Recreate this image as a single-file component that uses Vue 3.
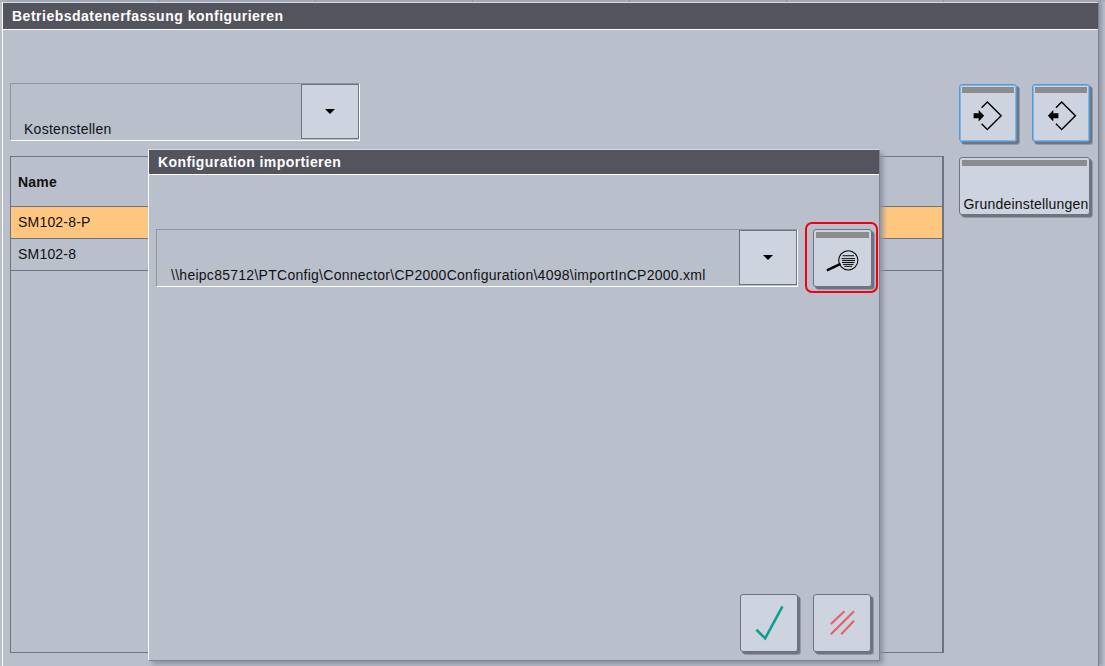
<script setup>
const ticks = [1, 2, 3, 4, 5, 6, 7]
</script>

<template>
  <div class="screen">
    <div class="strip">
      <span v-for="t in ticks" :key="t" class="tick"></span>
    </div>
    <section class="window">
      <header class="title">Betriebsdatenerfassung konfigurieren</header>
      <div class="body">
        <div class="main">
          <div class="combo">
            <span class="combo-text">Kostenstellen</span>
            <div class="drop"><i class="caret"></i></div>
          </div>
          <div class="table">
            <div class="row head">Name</div>
            <div class="row selected">SM102-8-P</div>
            <div class="row">SM102-8</div>
          </div>
        </div>
        <aside class="side">
          <div class="pair">
            <button class="btn blue">
              <span class="bar"></span>
              <svg width="54" height="50" viewBox="0 0 54 50">
                <path d="M20.3 15.3 L26.3 9.3 L40.7 23.7 L26.3 38 L20.3 32" fill="none" stroke="#000" stroke-width="1.5" />
                <path d="M12 21 H17.3 V17.7 L23 23.7 L17.3 29.7 V26.3 H12 Z" fill="#000" />
              </svg>
            </button>
            <button class="btn blue">
              <span class="bar"></span>
              <svg width="54" height="50" viewBox="0 0 54 50">
                <path d="M21.7 15.3 L27.7 9.3 L42 23.7 L27.7 38 L21.7 32" fill="none" stroke="#000" stroke-width="1.5" />
                <path d="M24.3 21 H19 V17.7 L13.3 23.7 L19 29.7 V26.3 H24.3 Z" fill="#000" />
              </svg>
            </button>
          </div>
          <button class="btn wide">
            <span class="bar"></span>
            <span class="label">Grundeinstellungen</span>
          </button>
        </aside>
      </div>
    </section>

    <section class="dialog">
      <header class="title small">Konfiguration importieren</header>
      <div class="dialog-body">
        <div class="path-row">
          <div class="combo path">
            <span class="combo-text">\\heipc85712\PTConfig\Connector\CP2000Configuration\4098\importInCP2000.xml</span>
            <div class="drop"><i class="caret"></i></div>
          </div>
          <button class="btn ringed">
            <span class="bar"></span>
            <svg width="54" height="50" viewBox="0 0 54 50">
              <circle cx="32.5" cy="23.3" r="10" fill="none" stroke="#000" stroke-width="1.1" />
              <path d="M10.2 33.7 L24.5 27" stroke="#000" stroke-width="2.6" fill="none" />
              <path d="M26.5 18.5 H38.5 M25.5 21.5 H39.5 M26 23.5 H39.5 M26 25.5 H39 M27 27.5 H38 M28.5 29.5 H36.5" stroke="#000" stroke-width="1" fill="none" />
            </svg>
          </button>
        </div>
        <div class="footer">
          <button class="btn plain">
            <svg width="54" height="54" viewBox="0 0 54 54">
              <path d="M14 34 L23 43 L41 9.7" fill="none" stroke="#0f9d90" stroke-width="2.6" />
            </svg>
          </button>
          <button class="btn plain">
            <svg width="54" height="54" viewBox="0 0 54 54">
              <path d="M15.5 28 L29.5 14.7 M15.5 38.7 L39.5 14.7 M26.2 38.7 L39.5 24.7" fill="none" stroke="#e2626a" stroke-width="2.2" />
            </svg>
          </button>
        </div>
      </div>
    </section>
  </div>
</template>

<style>
html, body { margin: 0; background: #b9c0cc; overflow: hidden; }
</style>

<style scoped>
.screen {
  position: relative;
  width: 1105px;
  height: 666px;
  overflow: hidden;
  background: #b9c0cc;
  font-family: "Liberation Sans", Arial, sans-serif;
  color: #111;
}
.strip {
  display: flex;
  height: 2px;
  background: #a9afbb;
}
.tick {
  width: 157px;
  flex: none;
  box-sizing: border-box;
  border-right: 1px solid #8a909c;
}
.tick:first-child { width: 159px; }
.window {
  width: 1096px;
  height: 664px;
  margin-left: 2px;
  box-sizing: border-box;
  border-left: 1px solid #fff;
  border-top: 1px solid #d5dae3;
  box-shadow: 1px 0 0 #7e838e, 4px 0 4px #8f95a1;
  display: flex;
  flex-direction: column;
}
.title {
  height: 27px;
  flex: none;
  box-sizing: border-box;
  border-bottom: 1px solid #fff;
  background: #53545e;
  color: #fff;
  font-size: 14px;
  font-weight: 700;
  letter-spacing: 0.5px;
  line-height: 26px;
  padding-left: 9px;
}
.title.small {
  height: 25px;
  line-height: 25px;
  letter-spacing: 0.42px;
}
.body {
  flex: 1;
  display: flex;
  gap: 15px;
  padding: 53px 0 13px 7px;
}
.main {
  width: 934px;
  display: flex;
  flex-direction: column;
  gap: 15px;
}
.combo {
  display: flex;
  justify-content: space-between;
  width: 350px;
  height: 58px;
  box-sizing: border-box;
  border-top: 1px solid #8f95a1;
  border-left: 1px solid #8f95a1;
  border-bottom: 1px solid #fff;
  border-right: 1px solid #fff;
  font-size: 14px;
  letter-spacing: 0.27px;
}
.combo-text {
  align-self: flex-end;
  padding: 0 0 3px 13px;
  line-height: 16px;
  white-space: nowrap;
}
.path .combo-text { padding-left: 14px; }
.drop {
  width: 58px;
  height: 55px;
  box-sizing: border-box;
  border: 1px solid #6d7380;
  background: #cdd3df;
  display: flex;
  align-items: center;
  justify-content: center;
}
.caret {
  width: 0;
  height: 0;
  border: 5px solid transparent;
  border-top: 5px solid #000;
  border-bottom: 0;
}
.table {
  flex: 1;
  box-sizing: border-box;
  border: 1px solid #6d7380;
  border-right-width: 2px;
}
.row {
  height: 32px;
  box-sizing: border-box;
  border-bottom: 1px solid #6d7380;
  padding-left: 7px;
  font-size: 14px;
  letter-spacing: 0.2px;
  line-height: 31px;
}
.head {
  height: 50px;
  line-height: 50px;
  font-weight: 700;
}
.selected { background: #ffc680; }
.side {
  padding-top: 1px;
  display: flex;
  flex-direction: column;
  gap: 15px;
}
.pair {
  display: flex;
  gap: 15px;
}
.btn {
  position: relative;
  width: 58px;
  height: 58px;
  padding: 2px 2px 0;
  box-sizing: border-box;
  border: 1px solid #6d7380;
  border-radius: 3px;
  background: #cdd3df;
  box-shadow: 2px 2px 0 #6f7480, 3px 3px 0 #9499a5;
  display: flex;
  flex-direction: column;
  align-items: center;
  font-family: inherit;
  color: #111;
}
.btn.blue {
  border: 1px solid #4f9be0;
  box-shadow: inset 0 0 0 1px #86b3dc, 2px 2px 0 #6f7480, 3px 3px 0 #9499a5;
}
.bar {
  display: block;
  width: 100%;
  height: 6px;
  flex: none;
  background: #8c8c8c;
}
.btn.wide {
  width: 131px;
}
.label {
  margin-top: auto;
  padding: 0 0 2px 3px;
  font-size: 14px;
  letter-spacing: 0.2px;
  line-height: 16px;
  white-space: nowrap;
}
.dialog {
  position: absolute;
  left: 148px;
  top: 149px;
  width: 731px;
  height: 511px;
  box-sizing: border-box;
  background: #b9c0cc;
  border-left: 1px solid #fff;
  border-top: 1px solid #d5dae3;
  box-shadow: 1px 1px 0 #7e838e, 4px 4px 5px #8b909c;
  display: flex;
  flex-direction: column;
}
.dialog-body {
  flex: 1;
  display: flex;
  flex-direction: column;
  justify-content: space-between;
  padding: 54px 7px 8px 7px;
}
.path-row {
  display: flex;
  gap: 15px;
}
.combo.path {
  width: 642px;
}
.btn.ringed {
  width: 59px;
}
.btn.ringed::after {
  content: "";
  position: absolute;
  left: -9px;
  top: -8px;
  width: 69px;
  height: 67px;
  border: 2px solid #f00010;
  border-radius: 7px;
}
.footer {
  display: flex;
  justify-content: flex-end;
  gap: 15px;
  padding-right: 1px;
}
.btn.plain {
  padding: 2px;
}
</style>
